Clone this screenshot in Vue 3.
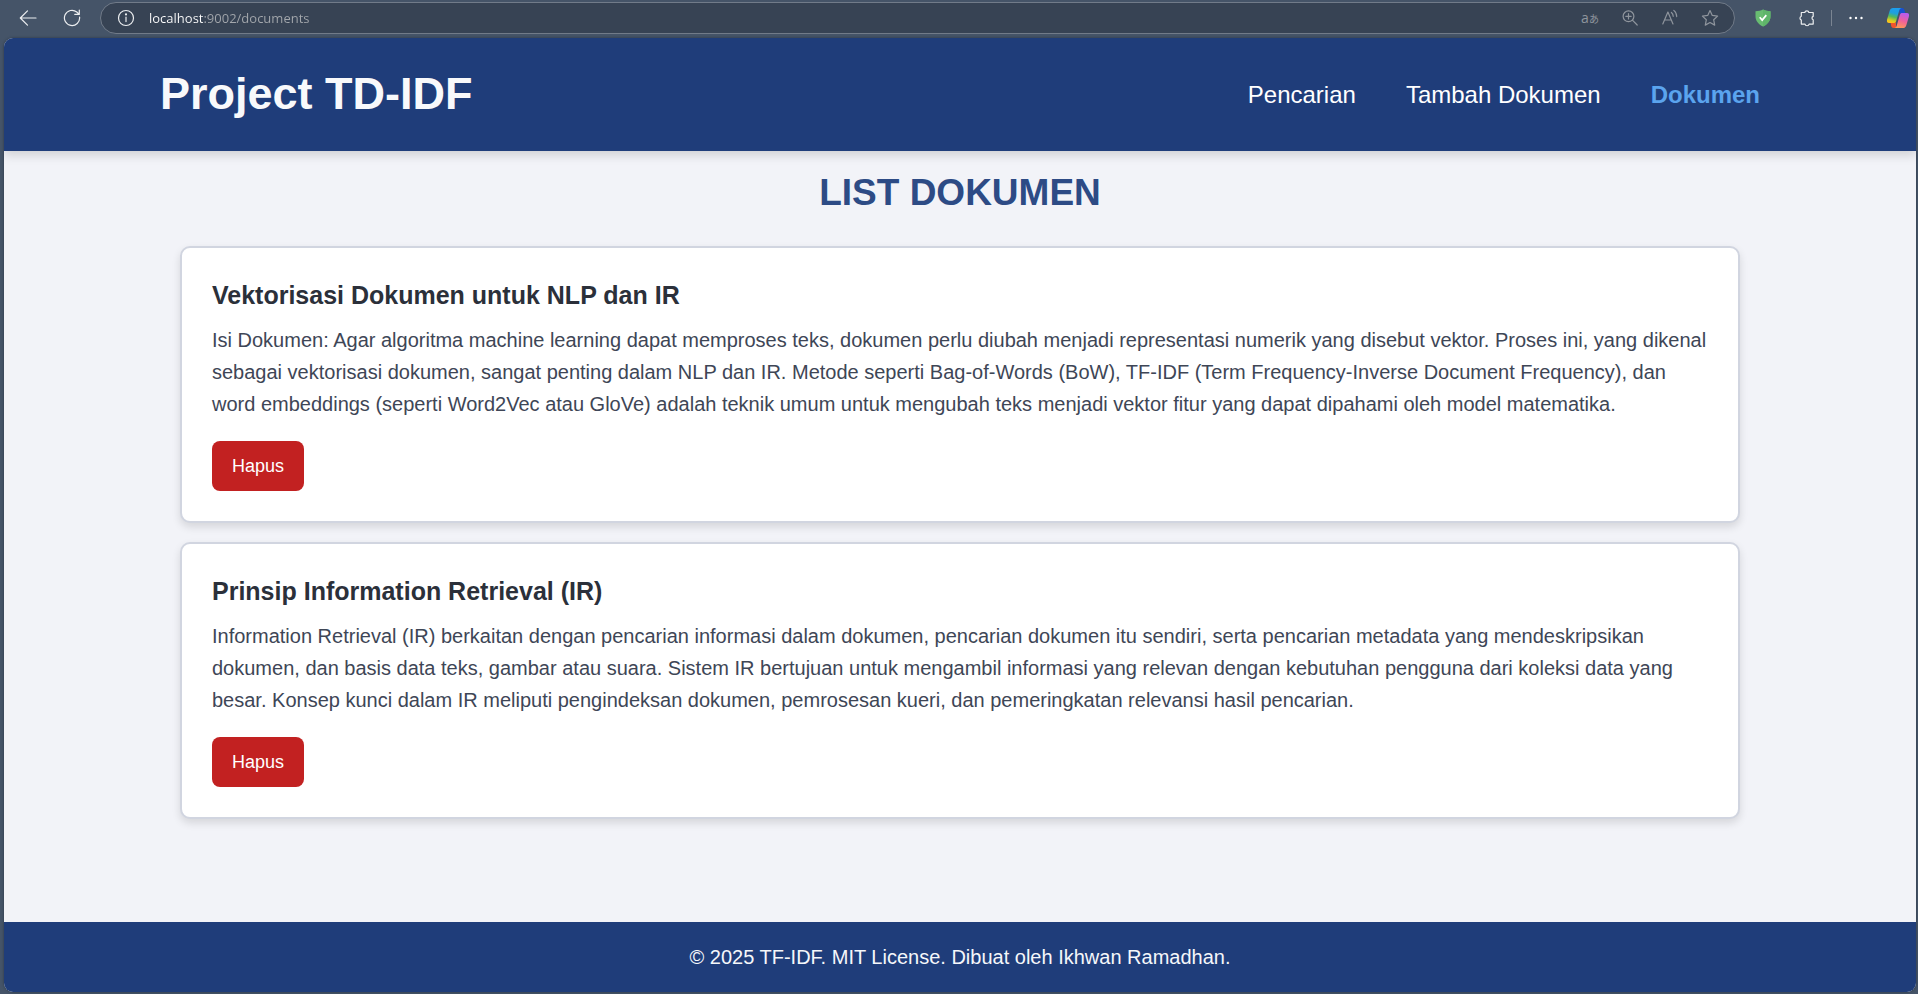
<script setup>
import { ref } from 'vue'

const address = ref('localhost:9002/documents')

const links = [
  { label: 'Pencarian', href: '#/', active: false },
  { label: 'Tambah Dokumen', href: '#/add', active: false },
  { label: 'Dokumen', href: '#/documents', active: true },
]

const documents = ref([
  {
    id: 1,
    title: 'Vektorisasi Dokumen untuk NLP dan IR',
    body: 'Isi Dokumen: Agar algoritma machine learning dapat memproses teks, dokumen perlu diubah menjadi representasi numerik yang disebut vektor. Proses ini, yang dikenal sebagai vektorisasi dokumen, sangat penting dalam NLP dan IR. Metode seperti Bag-of-Words (BoW), TF-IDF (Term Frequency-Inverse Document Frequency), dan word embeddings (seperti Word2Vec atau GloVe) adalah teknik umum untuk mengubah teks menjadi vektor fitur yang dapat dipahami oleh model matematika.',
  },
  {
    id: 2,
    title: 'Prinsip Information Retrieval (IR)',
    body: 'Information Retrieval (IR) berkaitan dengan pencarian informasi dalam dokumen, pencarian dokumen itu sendiri, serta pencarian metadata yang mendeskripsikan dokumen, dan basis data teks, gambar atau suara. Sistem IR bertujuan untuk mengambil informasi yang relevan dengan kebutuhan pengguna dari koleksi data yang besar. Konsep kunci dalam IR meliputi pengindeksan dokumen, pemrosesan kueri, dan pemeringkatan relevansi hasil pencarian.',
  },
])

function removeDocument(id) {
  documents.value = documents.value.filter((d) => d.id !== id)
}
</script>

<template>
  <div class="window">
    <div class="toolbar">
      <button class="tool" type="button" aria-label="Back">
        <svg width="18" height="18" viewBox="0 0 18 18" class="stroke">
          <path d="M17 9H1.5M8.5 1.8 1.3 9l7.2 7.2" />
        </svg>
      </button>
      <button class="tool" type="button" aria-label="Refresh">
        <svg width="18" height="18" viewBox="0 0 18 18" class="stroke">
          <path d="M16.6 8.2A7.6 7.6 0 1 1 13.8 3L16 5.2M16.3 1v4.4h-4.5" />
        </svg>
      </button>
      <div class="address">
        <button class="tool info" type="button" aria-label="Site information">
          <svg width="18" height="18" viewBox="0 0 18 18" class="stroke">
            <circle cx="9" cy="9" r="7.5" />
            <path d="M9 8v4.6" />
            <circle cx="9" cy="5.4" r=".5" fill="currentColor" />
          </svg>
        </button>
        <input v-model="address" class="url" type="text" aria-label="Address" spellcheck="false" />
        <button class="tool dim" type="button" aria-label="Translate">
          <span class="translate">a<small>あ</small></span>
        </button>
        <button class="tool dim" type="button" aria-label="Zoom">
          <svg width="18" height="18" viewBox="0 0 18 18" class="stroke">
            <circle cx="7.5" cy="7.3" r="5.4" />
            <path d="m11.4 11.2 4.8 4.8M7.5 4.6v5.4M4.8 7.3h5.4" />
          </svg>
        </button>
        <button class="tool dim" type="button" aria-label="Read aloud">
          <svg width="18" height="18" viewBox="0 0 18 18" class="stroke">
            <path d="M1.8 15 6.9 3l5.1 12M3.6 11h6.6M10.4 3.4c1.2.9 1.8 2.2 1.8 3.9M12.8 1.4c1.9 1.5 2.9 3.5 2.9 6.2" />
          </svg>
        </button>
        <button class="tool dim" type="button" aria-label="Add to favorites">
          <svg width="18" height="18" viewBox="0 0 18 18" class="stroke">
            <path d="m9 1.5 2.3 4.9 5.3.7-3.9 3.7 1 5.3L9 13.500l-4.7 2.600 1-5.300-3.900-3.700 5.300-.7z" />
          </svg>
        </button>
      </div>
      <button class="tool" type="button" aria-label="Ad blocker">
        <svg width="18" height="18" viewBox="0 0 18 18">
          <path d="M1.5 2.3C4.5 2.1 6.9 1.6 9 .6c2.1 1 4.5 1.5 7.5 1.7v4.9c0 4.6-3 8.1-7.500 10.300-4.500-2.200-7.500-5.700-7.500-10.300z" fill="#68bc71" />
          <path d="M9 .6c2.100 1 4.500 1.500 7.500 1.700v4.900c0 4.600-3 8.100-7.500 10.300z" fill="#5fb56a" />
          <path d="m5.700 8.300 2.500 2.800 4.100-5" fill="none" stroke="#fff" stroke-width="1.7" />
        </svg>
      </button>
      <button class="tool" type="button" aria-label="Extensions">
        <svg width="18" height="18" viewBox="0 0 18 18" class="stroke">
          <path d="M3.300 3.500h3.500a2.100 2.100 0 0 1 4.100 0h4.300v3.900a1.800 1.800 0 0 0 0 3.400v4.300h-4.100a2.100 2.100 0 0 1-4.100 0H3.300v-4a2.100 2.100 0 0 1 0-3.900z" />
        </svg>
      </button>
      <span class="divider"></span>
      <button class="tool more" type="button" aria-label="Settings and more">
        <svg width="18" height="18" viewBox="0 0 18 18" fill="#fff">
          <circle cx="3.5" cy="9" r="1.2" />
          <circle cx="9" cy="9" r="1.2" />
          <circle cx="14.5" cy="9" r="1.2" />
        </svg>
      </button>
      <button class="tool copilot" type="button" aria-label="Copilot">
        <svg width="24" height="22" viewBox="0 0 24 22">
          <defs>
            <linearGradient id="cool" x1=".6" y1="0" x2=".35" y2="1">
              <stop offset="0" stop-color="#1c9df0" />
              <stop offset=".35" stop-color="#1fa0dc" />
              <stop offset=".6" stop-color="#52b95c" />
              <stop offset=".85" stop-color="#d8cc22" />
              <stop offset="1" stop-color="#ffc21a" />
            </linearGradient>
            <linearGradient id="warm" x1=".6" y1="0" x2=".3" y2="1">
              <stop offset="0" stop-color="#b65cf0" />
              <stop offset=".5" stop-color="#f0609a" />
              <stop offset="1" stop-color="#ff9a55" />
            </linearGradient>
          </defs>
          <path d="M13 1h3c1.300 0 2 .8 2.400 2l.9 3.500h-5.500z" fill="#1750d0" />
          <path d="M10 21H7.500c-1.300 0-2-.8-2.300-2l-.7-3.500H10z" fill="#f0542d" />
          <path d="M7 1h8.500c-1.400.3-2 1.500-2.500 3.200l-2.900 10C9.600 15.700 8.700 16 7.500 16H3.200C1 16 .5 14.400 1.200 12L3.700 3.800C4.300 1.900 5.300 1 7 1z" fill="url(#cool)" />
          <path d="M17 21H8.500c1.400-.3 2-1.500 2.500-3.200l2.900-10C14.400 6.300 15.300 6 16.500 6h4.300c2.200 0 2.700 1.600 2 4l-2.500 8.200C19.700 20.100 18.700 21 17 21z" fill="url(#warm)" />
        </svg>
      </button>
    </div>

    <div class="page">
      <header class="header">
        <div class="header-inner">
          <h1 class="brand">Project TD-IDF</h1>
          <nav class="nav">
            <a v-for="link in links" :key="link.label" :href="link.href" :class="{ active: link.active }">{{ link.label }}</a>
          </nav>
        </div>
      </header>

      <main class="main">
        <h2 class="heading">LIST DOKUMEN</h2>
        <article v-for="doc in documents" :key="doc.id" class="card">
          <h3 class="card-title">{{ doc.title }}</h3>
          <p class="card-body">{{ doc.body }}</p>
          <button class="delete" type="button" @click="removeDocument(doc.id)">Hapus</button>
        </article>
      </main>

      <footer class="footer">© 2025 TF-IDF. MIT License. Dibuat oleh Ikhwan Ramadhan.</footer>
    </div>
  </div>
</template>

<style>
body {
  margin: 0;
  background: #455468;
}
</style>

<style scoped>
* {
  box-sizing: border-box;
}

.window {
  display: flex;
  flex-direction: column;
  min-height: 100vh;
  padding: 0 2px 2px 4px;
  background: #455468;
  font-family: "Liberation Sans", Arial, sans-serif;
}

.toolbar {
  display: flex;
  align-items: center;
  height: 38px;
  margin: 0 -2px 0 -4px;
  padding: 0 2px 2px 6px;
}

.tool {
  display: flex;
  flex: none;
  align-items: center;
  justify-content: center;
  width: 44px;
  height: 30px;
  padding: 0;
  border: 0;
  background: none;
  color: #eceef0;
}

.stroke {
  fill: none;
  stroke: currentColor;
  stroke-width: 1.2;
  stroke-linecap: round;
  stroke-linejoin: round;
}

.address {
  display: flex;
  flex: 1;
  align-items: center;
  height: 32px;
  margin: 0 6px;
  padding: 0 4px 0 5px;
  border: 1px solid #717b89;
  border-radius: 16px;
  background: #374354;
}

.address .tool {
  width: 40px;
}

.address .dim {
  color: #8f959d;
}

.url {
  flex: 1;
  min-width: 0;
  height: 24px;
  padding: 0 0 0 3px;
  border: 0;
  outline: 0;
  background: linear-gradient(90deg, #fff 58px, #a3a7ac 58px);
  background-clip: text;
  -webkit-background-clip: text;
  color: transparent;
  font: 13px "Open Sans", "Noto Sans", sans-serif;
}

.translate {
  font: 14px/16px "Open Sans", "Noto Sans CJK JP", sans-serif;
}

.translate small {
  font-size: 10px;
}

.divider {
  width: 1px;
  height: 16px;
  margin-left: 2px;
  background: #7b8592;
}

.more {
  width: 48px;
}

.copilot {
  width: 36px;
}

.page {
  display: flex;
  flex: 1;
  flex-direction: column;
  overflow: hidden;
  border-radius: 9px;
  background: #f2f3f8;
  box-shadow: 0 0 3px rgba(0, 0, 0, 0.35);
}

.header {
  padding: 24px;
  background: #1f3d7a;
  box-shadow: 0 4px 10px rgba(0, 0, 0, 0.15);
}

.header-inner {
  display: flex;
  align-items: center;
  justify-content: space-between;
  max-width: 1600px;
  margin: 0 auto;
}

.brand {
  margin: 0;
  padding-bottom: 2px;
  color: #f8f9fb;
  font-size: 45px;
  line-height: 63px;
}

.nav {
  display: flex;
  gap: 50px;
}

.nav a {
  color: #fff;
  font-size: 24px;
  line-height: 36px;
  text-decoration: none;
}

.nav a.active {
  color: #5ba4ee;
  font-weight: bold;
}

.main {
  flex: 1;
  width: 100%;
  max-width: 1600px;
  margin: 0 auto;
  padding: 12px 20px 84px;
}

.heading {
  margin: 0 0 23px;
  color: #2d4b85;
  font-size: 37px;
  line-height: 60px;
  text-align: center;
}

.card {
  margin-bottom: 19px;
  padding: 30px;
  border: 2px solid #d1d5e0;
  border-radius: 10px;
  background: #fff;
  box-shadow: 0 4px 8px rgba(0, 0, 0, 0.12);
}

.card-title {
  margin: 0 0 12px;
  color: #2b303a;
  font-size: 25px;
  line-height: 34px;
}

.card-body {
  margin: 0 0 21px;
  color: #3e4656;
  font-size: 20px;
  line-height: 32px;
}

.delete {
  display: block;
  height: 50px;
  padding: 0 20px;
  border: 0;
  border-radius: 8px;
  background: #c22121;
  color: #fff;
  font: 18px "Liberation Sans", Arial, sans-serif;
  cursor: pointer;
}

.footer {
  padding: 18px 20px;
  background: #1f3d7a;
  color: #f5f7fa;
  font-size: 20px;
  line-height: 34px;
  text-align: center;
}
</style>
